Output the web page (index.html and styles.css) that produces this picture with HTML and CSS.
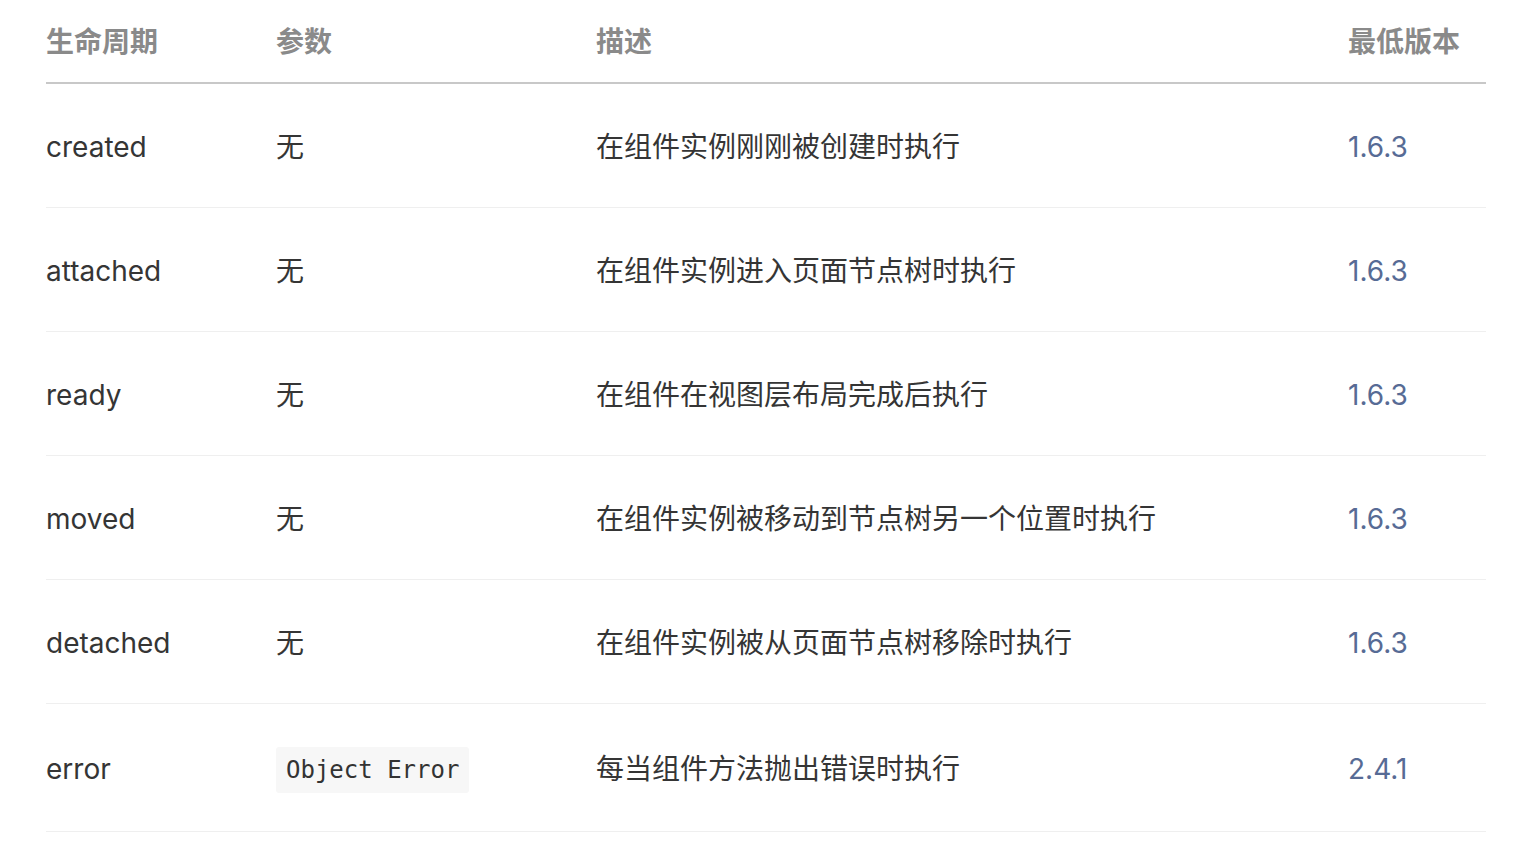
FILE: index.html
```html
<!DOCTYPE html>
<html lang="zh-CN">
<head>
<meta charset="utf-8">
<title>生命周期</title>
<link rel="stylesheet" href="styles.css">
</head>
<body>
<div class="page">
  <table class="lifecycle">
    <colgroup>
      <col class="c1"><col class="c2"><col class="c3"><col class="c4">
    </colgroup>
    <thead>
      <tr><th>生命周期</th><th>参数</th><th>描述</th><th>最低版本</th></tr>
    </thead>
    <tbody>
      <tr><td>created</td><td>无</td><td>在组件实例刚刚被创建时执行</td><td class="ver">1.6.3</td></tr>
      <tr><td>attached</td><td>无</td><td>在组件实例进入页面节点树时执行</td><td class="ver">1.6.3</td></tr>
      <tr><td>ready</td><td>无</td><td>在组件在视图层布局完成后执行</td><td class="ver">1.6.3</td></tr>
      <tr><td>moved</td><td>无</td><td>在组件实例被移动到节点树另一个位置时执行</td><td class="ver">1.6.3</td></tr>
      <tr><td>detached</td><td>无</td><td>在组件实例被从页面节点树移除时执行</td><td class="ver">1.6.3</td></tr>
      <tr class="tall"><td>error</td><td><code class="code">Object Error</code></td><td>每当组件方法抛出错误时执行</td><td class="ver">2.4.1</td></tr>
    </tbody>
  </table>
</div>
</body>
</html>
```
FILE: styles.css
```css
html, body {
  margin: 0;
  padding: 0;
  background: #ffffff;
}
body {
  font-family: Inter, "Noto Sans CJK SC", sans-serif;
  color: #353535;
}
.page {
  padding: 0 0 0 46px;
}
.lifecycle {
  width: 1440px;
  border-collapse: collapse;
  table-layout: fixed;
  font-size: 28px;
  line-height: 45px;
}
.c1 { width: 230px; }
.c2 { width: 320px; }
.c3 { width: 752px; }
.c4 { width: 138px; }
.lifecycle th {
  text-align: left;
  font-weight: 600;
  color: #8a8a8a;
  padding: 20px 0 17px;
  border-bottom: 2px solid #c8c8c8;
}
.lifecycle td {
  padding: 41px 0 37px;
  border-bottom: 1px solid #efefef;
  vertical-align: middle;
}
.lifecycle .tall td {
  padding: 42px 0 38px;
}
.lifecycle td.ver {
  color: #576b95;
}
.code {
  display: inline-block;
  font-family: "DejaVu Sans Mono", monospace;
  font-size: 24px;
  line-height: 46px;
  padding: 0 10px;
  background: #f7f7f7;
  border-radius: 3px;
  color: #333;
  vertical-align: middle;
}
```
